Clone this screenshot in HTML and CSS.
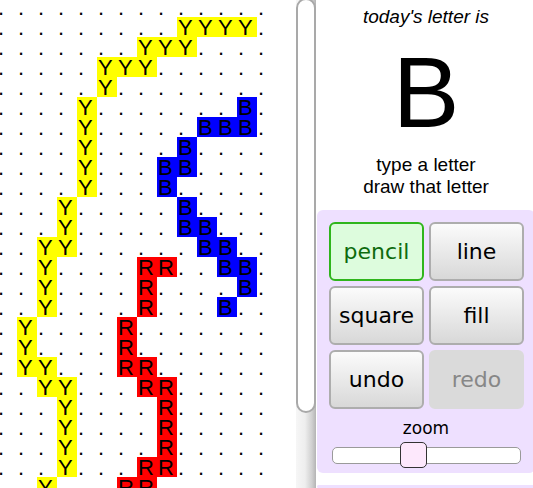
FILE: index.html
```html
<!DOCTYPE html>
<html>
<head>
<meta charset="utf-8">
<title>Letter of the day</title>
<link rel="stylesheet" href="styles.css">
</head>
<body>
<div class="app">
  <div class="board-scroll">
    <div class="board">
      <span>.</span><span>.</span><span>.</span><span>.</span><span>.</span><span>.</span><span>.</span><span>.</span><span>.</span><span>.</span><span>.</span><span>.</span><span>.</span><span>.</span>
      <span>.</span><span>.</span><span>.</span><span>.</span><span>.</span><span>.</span><span>.</span><span>.</span><span>.</span><span class="y">Y</span><span class="y">Y</span><span class="y">Y</span><span class="y">Y</span><span>.</span>
      <span>.</span><span>.</span><span>.</span><span>.</span><span>.</span><span>.</span><span>.</span><span class="y">Y</span><span class="y">Y</span><span class="y">Y</span><span>.</span><span>.</span><span>.</span><span>.</span>
      <span>.</span><span>.</span><span>.</span><span>.</span><span>.</span><span class="y">Y</span><span class="y">Y</span><span class="y">Y</span><span>.</span><span>.</span><span>.</span><span>.</span><span>.</span><span>.</span>
      <span>.</span><span>.</span><span>.</span><span>.</span><span>.</span><span class="y">Y</span><span>.</span><span>.</span><span>.</span><span>.</span><span>.</span><span>.</span><span>.</span><span>.</span>
      <span>.</span><span>.</span><span>.</span><span>.</span><span class="y">Y</span><span>.</span><span>.</span><span>.</span><span>.</span><span>.</span><span>.</span><span>.</span><span class="b">B</span><span>.</span>
      <span>.</span><span>.</span><span>.</span><span>.</span><span class="y">Y</span><span>.</span><span>.</span><span>.</span><span>.</span><span>.</span><span class="b">B</span><span class="b">B</span><span class="b">B</span><span>.</span>
      <span>.</span><span>.</span><span>.</span><span>.</span><span class="y">Y</span><span>.</span><span>.</span><span>.</span><span>.</span><span class="b">B</span><span>.</span><span>.</span><span>.</span><span>.</span>
      <span>.</span><span>.</span><span>.</span><span>.</span><span class="y">Y</span><span>.</span><span>.</span><span>.</span><span class="b">B</span><span class="b">B</span><span>.</span><span>.</span><span>.</span><span>.</span>
      <span>.</span><span>.</span><span>.</span><span>.</span><span class="y">Y</span><span>.</span><span>.</span><span>.</span><span class="b">B</span><span>.</span><span>.</span><span>.</span><span>.</span><span>.</span>
      <span>.</span><span>.</span><span>.</span><span class="y">Y</span><span>.</span><span>.</span><span>.</span><span>.</span><span>.</span><span class="b">B</span><span>.</span><span>.</span><span>.</span><span>.</span>
      <span>.</span><span>.</span><span>.</span><span class="y">Y</span><span>.</span><span>.</span><span>.</span><span>.</span><span>.</span><span class="b">B</span><span class="b">B</span><span>.</span><span>.</span><span>.</span>
      <span>.</span><span>.</span><span class="y">Y</span><span class="y">Y</span><span>.</span><span>.</span><span>.</span><span>.</span><span>.</span><span>.</span><span class="b">B</span><span class="b">B</span><span>.</span><span>.</span>
      <span>.</span><span>.</span><span class="y">Y</span><span>.</span><span>.</span><span>.</span><span>.</span><span class="r">R</span><span class="r">R</span><span>.</span><span>.</span><span class="b">B</span><span class="b">B</span><span>.</span>
      <span>.</span><span>.</span><span class="y">Y</span><span>.</span><span>.</span><span>.</span><span>.</span><span class="r">R</span><span>.</span><span>.</span><span>.</span><span>.</span><span class="b">B</span><span>.</span>
      <span>.</span><span>.</span><span class="y">Y</span><span>.</span><span>.</span><span>.</span><span>.</span><span class="r">R</span><span>.</span><span>.</span><span>.</span><span class="b">B</span><span>.</span><span>.</span>
      <span>.</span><span class="y">Y</span><span>.</span><span>.</span><span>.</span><span>.</span><span class="r">R</span><span>.</span><span>.</span><span>.</span><span>.</span><span>.</span><span>.</span><span>.</span>
      <span>.</span><span class="y">Y</span><span>.</span><span>.</span><span>.</span><span>.</span><span class="r">R</span><span>.</span><span>.</span><span>.</span><span>.</span><span>.</span><span>.</span><span>.</span>
      <span>.</span><span class="y">Y</span><span class="y">Y</span><span>.</span><span>.</span><span>.</span><span class="r">R</span><span class="r">R</span><span>.</span><span>.</span><span>.</span><span>.</span><span>.</span><span>.</span>
      <span>.</span><span>.</span><span class="y">Y</span><span class="y">Y</span><span>.</span><span>.</span><span>.</span><span class="r">R</span><span class="r">R</span><span>.</span><span>.</span><span>.</span><span>.</span><span>.</span>
      <span>.</span><span>.</span><span>.</span><span class="y">Y</span><span>.</span><span>.</span><span>.</span><span>.</span><span class="r">R</span><span>.</span><span>.</span><span>.</span><span>.</span><span>.</span>
      <span>.</span><span>.</span><span>.</span><span class="y">Y</span><span>.</span><span>.</span><span>.</span><span>.</span><span class="r">R</span><span>.</span><span>.</span><span>.</span><span>.</span><span>.</span>
      <span>.</span><span>.</span><span>.</span><span class="y">Y</span><span>.</span><span>.</span><span>.</span><span>.</span><span class="r">R</span><span>.</span><span>.</span><span>.</span><span>.</span><span>.</span>
      <span>.</span><span>.</span><span>.</span><span class="y">Y</span><span>.</span><span>.</span><span>.</span><span class="r">R</span><span class="r">R</span><span>.</span><span>.</span><span>.</span><span>.</span><span>.</span>
      <span>.</span><span>.</span><span class="y">Y</span><span>.</span><span>.</span><span>.</span><span class="r">R</span><span class="r">R</span><span>.</span><span>.</span><span>.</span><span>.</span><span>.</span><span>.</span>
    </div>
  </div>
  <div class="scrollbar"><div class="thumb"></div></div>
  <aside class="side">
    <p class="intro">today's letter is</p>
    <div class="letter">B</div>
    <p class="hint">type a letter<br>draw that letter</p>
    <section class="panel tools">
      <div class="tool-grid">
        <button class="tool active">pencil</button>
        <button class="tool">line</button>
        <button class="tool">square</button>
        <button class="tool">fill</button>
        <button class="tool">undo</button>
        <button class="tool disabled">redo</button>
      </div>
      <div class="zoom-label">zoom</div>
      <div class="slider"><div class="knob"></div></div>
    </section>
    <section class="panel next"></section>
  </aside>
</div>
</body>
</html>
```

FILE: styles.css
```css
html, body {
  margin: 0;
  padding: 0;
  background: #fff;
  overflow: hidden;
}

.app {
  display: flex;
  height: 488px;
  overflow: hidden;
  font-family: "Liberation Sans", Arial, sans-serif;
}

.board-scroll {
  width: 296px;
  flex: none;
  height: 488px;
  overflow: hidden;
}

.board {
  display: grid;
  grid-template-columns: repeat(14, 20px);
  grid-auto-rows: 20px;
  margin: -3px 0 0 -3px;
}

.board > span {
  display: block;
  height: 20px;
  padding: 2px 0 0 1px;
  box-sizing: border-box;
  font: 22px/18px "Liberation Sans", Arial, sans-serif;
  color: #000;
}

.board > .y { background: #ffff00; }
.board > .b { background: #0000ff; }
.board > .r { background: #ff0000; }

.scrollbar {
  width: 20px;
  flex: none;
  height: 488px;
  background: linear-gradient(to right, #f6f6f6 0%, #eeeeee 45%, #cfcfcf 80%, #b4b4b4 100%);
  display: flex;
  flex-direction: column;
}

.thumb {
  margin-top: -2px;
  height: 415px;
  box-sizing: border-box;
  border: 2px solid #a9a9a9;
  border-radius: 10px;
  background: #fff;
}

.side {
  width: 218px;
  flex: none;
  margin-left: 1px;
  display: flex;
  flex-direction: column;
  align-items: center;
}

.intro {
  margin: 0;
  padding-top: 6px;
  font-size: 19px;
  line-height: 22px;
  font-style: italic;
  color: #000;
}

.letter {
  margin-top: 14px;
  font-size: 100px;
  line-height: 100px;
  color: #000;
}

.hint {
  margin: 12px 0 0;
  font-size: 19px;
  line-height: 22px;
  text-align: center;
  color: #000;
}

.panel {
  align-self: stretch;
  background: #eee0ff;
  border-radius: 6px;
}

.tools {
  margin-top: 12px;
  padding: 12px 12px 5px;
  display: flex;
  flex-direction: column;
}

.tool-grid {
  display: grid;
  grid-template-columns: 95px 95px;
  grid-auto-rows: 59px;
  gap: 5px;
}

.tool {
  margin: 0;
  padding: 0;
  font: 22px "DejaVu Sans", Verdana, sans-serif;
  color: #000;
  border: 2px solid #adadad;
  border-radius: 6px;
  background: linear-gradient(#fbfbfb, #d8d8d8);
}

.tool.active {
  background: #ddfcdd;
  border-color: #2fb51c;
  color: #0d6b0d;
}

.tool.disabled {
  background: #dadada;
  border-color: #dadada;
  color: #878787;
}

.zoom-label {
  margin-top: 9px;
  font: 17px/20px "DejaVu Sans", Verdana, sans-serif;
  text-align: center;
  color: #000;
}

.slider {
  position: relative;
  margin: 4px 0 0 3px;
  width: 189px;
  height: 26px;
  display: flex;
  align-items: center;
}

.slider::before {
  content: "";
  display: block;
  width: 100%;
  height: 17px;
  box-sizing: border-box;
  border: 1px solid #9a9a9a;
  border-radius: 5px;
  background: #fff;
}

.knob {
  position: absolute;
  left: 68px;
  top: 0;
  width: 27px;
  height: 26px;
  box-sizing: border-box;
  border: 1px solid #333;
  border-radius: 5px;
  background: #fde8fc;
}

.next {
  margin-top: 12px;
  height: 40px;
}
```
